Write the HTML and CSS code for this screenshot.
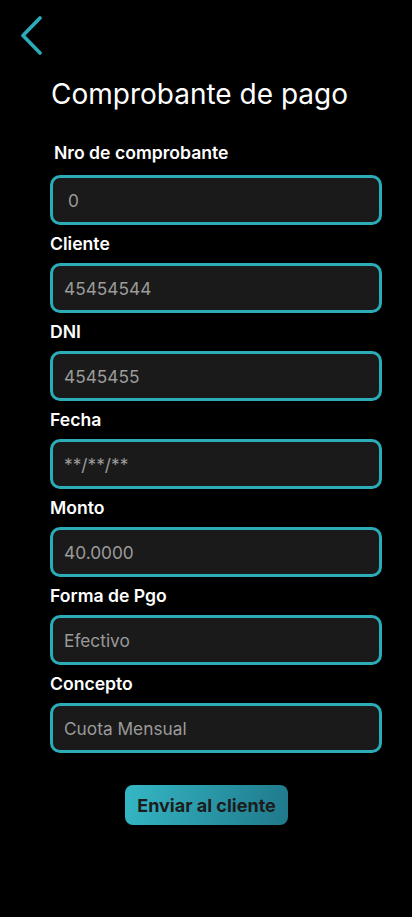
FILE: index.html
```html
<!DOCTYPE html>
<html lang="es">
<head>
<meta charset="utf-8">
<link rel="stylesheet" href="styles.css">
</head>
<body>
<div class="screen">
  <button class="back" aria-label="Volver">
    <svg width="24" height="40" viewBox="0 0 24 40"><polyline points="20,2 3,19.5 20,37" fill="none" stroke="#2aacbb" stroke-width="3.6" stroke-linecap="round" stroke-linejoin="round"/></svg>
  </button>
  <h1 class="title">Comprobante de pago</h1>
  <form class="form">
    <div class="field first">
      <label class="label">Nro de comprobante</label>
      <div class="input">0</div>
    </div>
    <div class="field">
      <label class="label">Cliente</label>
      <div class="input">45454544</div>
    </div>
    <div class="field">
      <label class="label">DNI</label>
      <div class="input">4545455</div>
    </div>
    <div class="field">
      <label class="label">Fecha</label>
      <div class="input">**/**/**</div>
    </div>
    <div class="field">
      <label class="label">Monto</label>
      <div class="input">40.0000</div>
    </div>
    <div class="field">
      <label class="label">Forma de Pgo</label>
      <div class="input">Efectivo</div>
    </div>
    <div class="field">
      <label class="label">Concepto</label>
      <div class="input">Cuota Mensual</div>
    </div>
    <div class="actions">
      <button type="button" class="send">Enviar al cliente</button>
    </div>
  </form>
</div>
</body>
</html>
```

FILE: styles.css
```css
* { box-sizing: border-box; }
html, body { margin: 0; padding: 0; background: #000; }
body {
  font-family: Inter, "Noto Sans", sans-serif;
  color: #fff;
  width: 412px;
  height: 917px;
  overflow: hidden;
}
.screen { padding: 16px 0 0 0; }
.back {
  display: block;
  margin-left: 20px;
  padding: 0;
  background: none;
  border: 0;
  width: 24px;
  height: 40px;
}
.back svg { display: block; }
.title {
  margin: 21px 0 0 51px;
  font-size: 28px;
  font-weight: 400;
  line-height: 34px;
  letter-spacing: 0;
}
.form {
  margin: 0 30px 0 50px;
  display: flex;
  flex-direction: column;
  gap: 8px;
  padding-top: 31px;
}
.field { display: flex; flex-direction: column; gap: 8px; }
.field.first { gap: 11px; }
.label {
  font-size: 17.6px;
  font-weight: 600;
  line-height: 22px;
}
.field.first .label { padding-left: 4px; }
.input {
  height: 50px;
  border: 3px solid #2aacbb;
  border-radius: 10px;
  background: #1a1a1a;
  color: #9b9b9b;
  font-size: 17.3px;
  line-height: 44px;
  padding: 1px 0 0 11px;
}
.field.first .input { padding-left: 15px; }
.actions { display: flex; justify-content: center; padding-top: 24px; margin-left: -19px; }
.send {
  width: 163px;
  height: 40px;
  border: 0;
  border-radius: 8px;
  background: linear-gradient(105deg, #35b7c5, #1f788a);
  color: #1c1c1c;
  font-family: Inter, "Noto Sans", sans-serif;
  font-size: 18px;
  font-weight: 700;
  padding: 0;
}
```
